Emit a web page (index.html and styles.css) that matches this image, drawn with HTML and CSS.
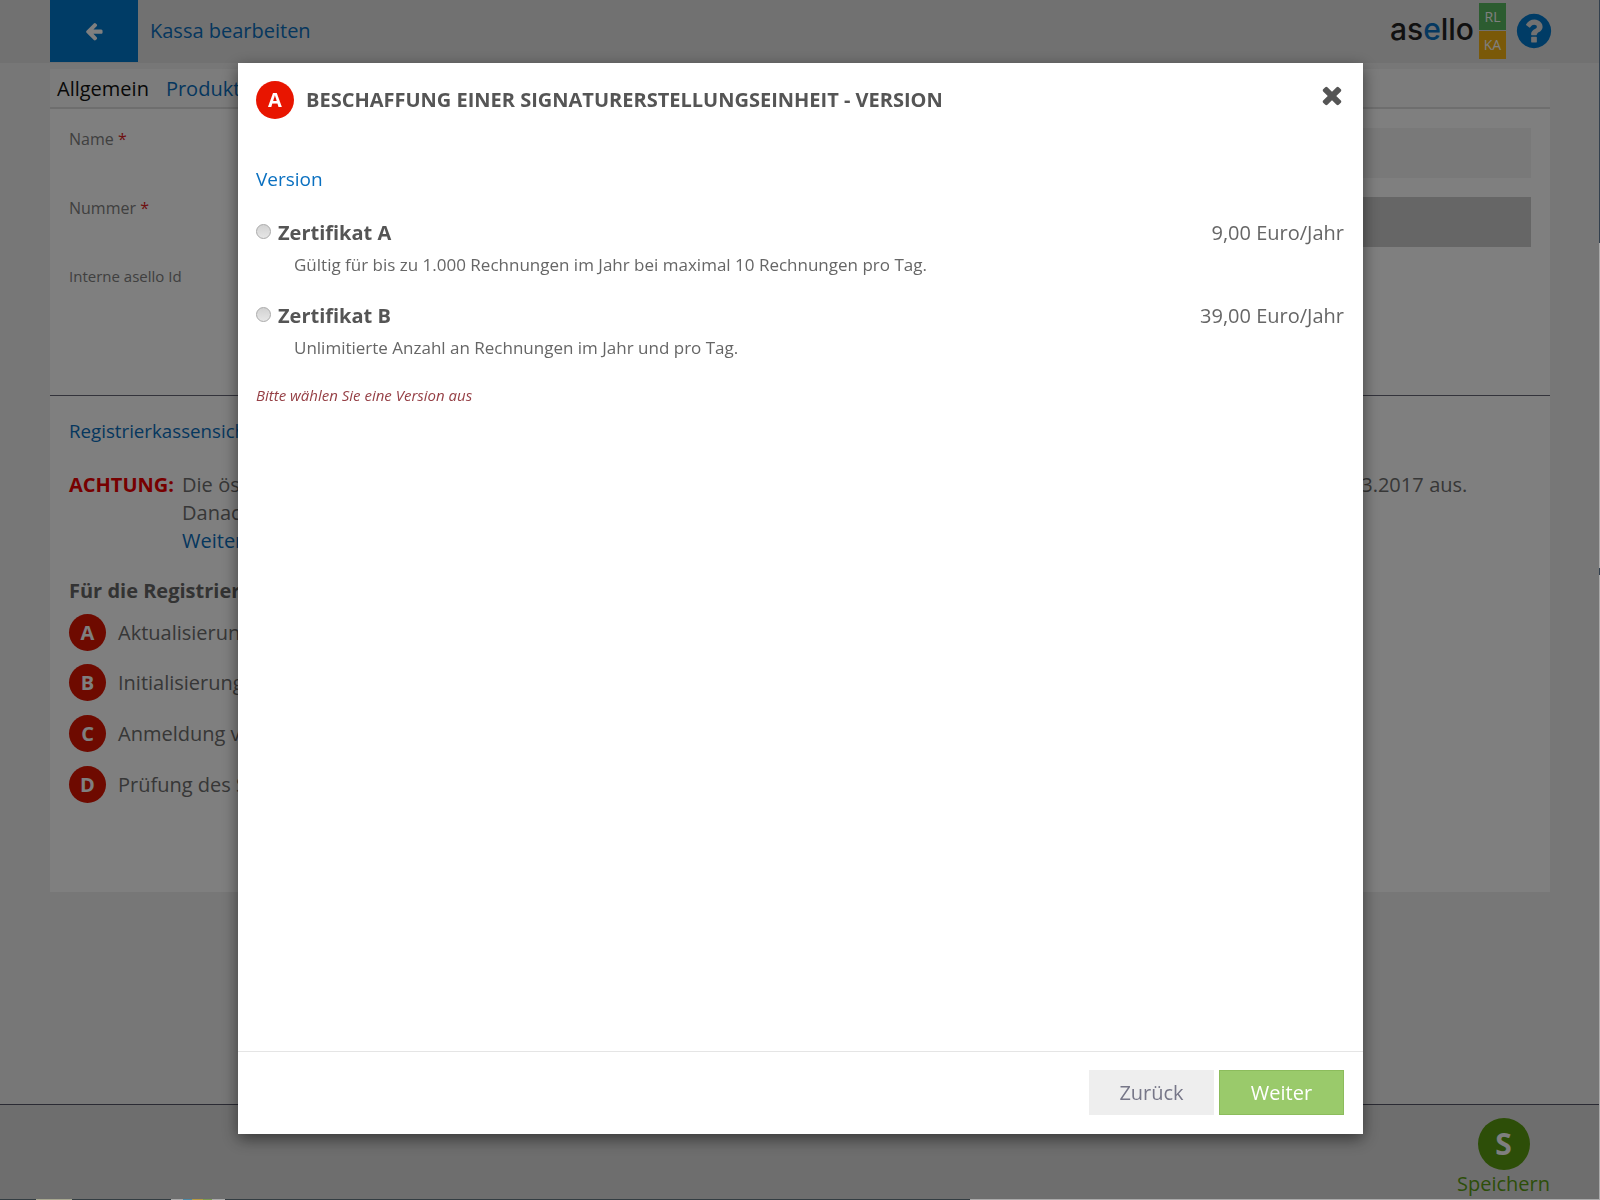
FILE: index.html
```html
<!DOCTYPE html>
<html lang="de">
<head>
<meta charset="utf-8">
<title>Kassa bearbeiten</title>
<link rel="stylesheet" href="styles.css">
</head>
<body>
<div class="page">
  <header class="topbar">
    <a class="back"><svg class="back-icon" viewBox="0 0 1792 1792"><path d="M1664 896v128q0 53-32.500 90.500t-84.500 37.500h-704l293 294q38 36 38 90t-38 90l-75 76q-37 37-90 37-52 0-91-37l-651-652q-37-37-37-90 0-52 37-91l651-650q38-38 91-38 52 0 90 38l75 74q38 38 38 91t-38 91l-293 293h704q52 0 84.500 37.500t32.500 90.500z"/></svg></a>
    <div class="page-title">Kassa bearbeiten</div>
    <div class="brand">
      <span class="logo">as<span class="logo-e">e</span>llo</span>
      <div class="badges"><span class="badge badge-rl">RL</span><span class="badge badge-ka">KA</span></div>
      <svg class="help" viewBox="0 0 1792 1792"><path d="M1024 1376v-192q0-14-9-23t-23-9h-192q-14 0-23 9t-9 23v192q0 14 9 23t23 9h192q14 0 23-9t9-23zm256-672q0-88-55.500-163t-138.500-116-170-41q-243 0-371 213-15 24 8 42l132 100q7 6 19 6 16 0 25-12 53-68 86-92 34-24 86-24 48 0 85.500 26t37.500 59q0 38-20 61t-68 45q-63 28-115.500 86.500t-52.500 125.500v36q0 14 9 23t23 9h192q14 0 23-9t9-23q0-19 21.500-49.500t54.500-49.500q32-18 49-28.500t46-35 44.500-48 28-60.500 12.500-81zm384 192q0 209-103 385.500t-279.500 279.500-385.500 103-385.500-103-279.500-279.500-103-385.500 103-385.500 279.500-279.500 385.500-103 385.500 103 279.500 279.500 103 385.500z"/></svg>
    </div>
  </header>
  <main class="content">
    <section class="card">
      <nav class="tabs"><span class="tab tab-active">Allgemein</span><span class="tab">Produkte</span></nav>
      <div class="form">
        <div class="form-row"><label class="label">Name <em class="req">*</em></label><div class="input"></div></div>
        <div class="form-row"><label class="label">Nummer <em class="req">*</em></label><div class="input input-dark"></div></div>
        <div class="form-row"><label class="label label-small">Interne asello Id</label></div>
      </div>
      <div class="rksv">
        <div class="rksv-link">Registrierkassensicherheitsverordnung</div>
        <div class="notice">
          <strong class="notice-label">ACHTUNG:</strong>
          <div class="notice-body">
            <p class="notice-line">Die österreichische Registrierkassensicherheitsverordnung sieht die Inbetriebnahme aller Registrierkassen spätestens am 31.03.2017 aus.</p>
            <p>Danach</p>
            <p class="notice-more">Weitere</p>
          </div>
        </div>
        <h3 class="steps-title">Für die Registrierung</h3>
        <div class="steps">
          <div class="step"><span class="step-dot">A</span>Aktualisierung</div>
          <div class="step"><span class="step-dot">B</span>Initialisierung</div>
          <div class="step"><span class="step-dot">C</span>Anmeldung von</div>
          <div class="step"><span class="step-dot">D</span>Prüfung des Startbelegs</div>
        </div>
      </div>
    </section>
  </main>
  <footer class="footer">
    <div class="save"><span class="save-dot">S</span><span class="save-label">Speichern</span></div>
  </footer>
</div>
<div class="overlay"></div>
<div class="modal">
  <div class="modal-head">
    <span class="modal-dot">A</span>
    <h2 class="modal-title">BESCHAFFUNG EINER SIGNATURERSTELLUNGSEINHEIT - VERSION</h2>
    <svg class="close" viewBox="0 0 1792 1792"><path d="M1490 1322q0 40-28 68l-136 136q-28 28-68 28t-68-28l-294-294-294 294q-28 28-68 28t-68-28l-136-136q-28-28-28-68t28-68l294-294-294-294q-28-28-28-68t28-68l136-136q28-28 68-28t68 28l294 294 294-294q28-28 68-28t68 28l136 136q28 28 28 68t-28 68l-294 294 294 294q28 28 28 68z"/></svg>
  </div>
  <div class="modal-body">
    <div class="section-name">Version</div>
    <div class="option">
      <div class="option-top">
        <input class="radio" type="radio" name="version">
        <span class="option-name">Zertifikat A</span>
        <span class="option-price">9,00 Euro/Jahr</span>
      </div>
      <p class="option-desc">Gültig für bis zu 1.000 Rechnungen im Jahr bei maximal 10 Rechnungen pro Tag.</p>
    </div>
    <div class="option">
      <div class="option-top">
        <input class="radio" type="radio" name="version">
        <span class="option-name">Zertifikat B</span>
        <span class="option-price">39,00 Euro/Jahr</span>
      </div>
      <p class="option-desc">Unlimitierte Anzahl an Rechnungen im Jahr und pro Tag.</p>
    </div>
    <p class="error">Bitte wählen Sie eine Version aus</p>
  </div>
  <div class="modal-foot">
    <button class="btn btn-back">Zurück</button>
    <button class="btn btn-next">Weiter</button>
  </div>
</div>
<div class="edge-right"></div>
<div class="edge-bottom"></div>
</body>
</html>
```
FILE: styles.css
```css
* { box-sizing: border-box; }
html, body { margin: 0; height: 100%; }
body { font-family: "Open Sans", sans-serif; color: #555; background: #eee; overflow: hidden; }
.page { height: 1200px; display: flex; flex-direction: column; }

.topbar { height: 63px; background: #e2e2e2; display: flex; align-items: flex-start; padding: 0 50px; flex: none; }
.back { width: 88px; height: 62px; background: #0078cc; display: flex; align-items: center; justify-content: center; }
.back-icon { width: 20px; height: 20px; fill: #fff; }
.page-title { margin-left: 12px; font-size: 20px; line-height: 62px; color: #0a6ebd; }
.brand { margin-left: auto; display: flex; align-items: flex-start; }
.logo { font-family: "Inter", sans-serif; font-weight: 500; font-size: 30px; line-height: 58px; color: #222; }
.logo-e { color: #0a70c0; }
.badges { margin-left: 5px; margin-top: 3px; display: flex; flex-direction: column; gap: 1px; }
.badge { width: 27px; height: 27px; font-size: 14px; line-height: 27px; text-align: center; color: #fff; }
.badge-rl { background: #59b860; }
.badge-ka { background: #f5b312; height: 28px; }
.help { width: 40px; height: 40px; margin-left: 8px; margin-top: 11px; margin-right: -4px; fill: #0078cc; }

.content { flex: 1; padding: 6px 50px 0; }
.card { height: 823px; background: #fff; }
.tabs { height: 40px; background: #f8f8f8; border-bottom: 2px solid #ddd; display: flex; gap: 17px; padding-left: 7px; }
.tab { font-size: 20px; line-height: 39px; color: #0a6ebd; }
.tab-active { color: #111; }
.form { height: 287px; padding: 19px 19px 0; border-bottom: 1px solid #667; }
.form-row { display: flex; height: 69px; }
.label { width: 200px; font-size: 16px; line-height: 22px; color: #808080; }
.label-small { font-size: 15px; line-height: 20px; }
.req { font-style: normal; color: #d22; }
.input { flex: 1; height: 50px; background: #f2f2f2; }
.input-dark { background: #ccc; }
.rksv { padding: 20px 19px 0; }
.rksv-link { font-size: 18.72px; line-height: 30px; color: #0a6ebd; }
.notice { display: flex; margin-top: 25px; font-size: 20px; line-height: 28px; color: #6e6e6e; }
.notice-label { color: #e00; width: 113px; flex: none; }
.notice-body p { margin: 0; }
.notice-body .notice-line { word-spacing: .3px; }
.notice-body .notice-more { color: #0a6ebd; }
.steps-title { margin: 22px 0 0; font-size: 20px; line-height: 28px; font-weight: 700; color: #666; }
.steps { display: flex; flex-direction: column; gap: 12.9px; margin-top: 8px; }
.step { display: flex; align-items: center; gap: 12px; height: 38px; font-size: 20px; color: #6e6e6e; }
.step-dot { width: 37px; height: 37px; border-radius: 50%; background: #dc1400; color: #fff; font-weight: 700; font-size: 20px; text-align: center; line-height: 37px; }

.footer { height: 96px; flex: none; background: #ddd; border-top: 1px solid #556; display: flex; justify-content: flex-end; padding-right: 50px; }
.save { display: flex; flex-direction: column; align-items: center; padding-top: 13px; }
.save-dot { width: 52px; height: 52px; border-radius: 50%; background: #5a9c10; color: #fff; font-weight: 700; font-size: 30px; line-height: 52px; text-align: center; }
.save-label { font-size: 20px; line-height: 26px; margin-top: 1px; color: #5a9c10; }

.overlay { position: fixed; inset: 0; background: rgba(0, 0, 0, .5); }
.edge-right { position: fixed; top: 0; right: 0; bottom: 0; width: 1px; background: linear-gradient(180deg, #33404e 0 243px, #aaa 243px 568px, #33404e 568px 575px, #aaa 575px); }
.edge-bottom { position: fixed; left: 0; right: 0; bottom: 0; height: 1px; background: linear-gradient(90deg, #333d42 0 36px, #a8a890 36px 72px, #333d42 72px 171px, #aaa 171px 183px, #4a8aa8 183px 192px, #b89a40 192px 203px, #7a9a50 203px 212px, #aaa 212px 225px, #333d42 225px 970px, #aaa 970px); }
.modal { position: fixed; left: 238px; top: 63px; width: 1125px; height: 1071px; background: #fff; box-shadow: 0 5px 15px rgba(0, 0, 0, .5); display: flex; flex-direction: column; }
.modal-head { display: flex; align-items: flex-start; padding: 18px 19px 0 18px; height: 90px; flex: none; }
.modal-dot { width: 38px; height: 38px; border-radius: 50%; background: #e81500; color: #fff; font-weight: 700; font-size: 20px; line-height: 38px; text-align: center; }
.modal-title { margin: 0 0 0 12px; font-size: 20px; line-height: 38px; font-weight: 700; color: #555; }
.close { width: 28px; height: 28px; margin-left: auto; margin-right: -2px; fill: #555; }
.modal-body { flex: 1; padding: 0 19px 0 18px; }
.section-name { font-size: 19px; line-height: 26px; color: #0a70c0; margin-top: 13px; }
.option { margin-top: 26px; }
.option + .option { margin-top: 22px; }
.option-top { display: flex; align-items: center; height: 28px; }
.radio { appearance: none; width: 15px; height: 15px; margin: 0 7px 2px 0; border-radius: 50%; border: 1px solid #aaa; background: linear-gradient(#d2d2d2, #e6e6e6); }
.option-name { font-size: 20px; font-weight: 700; color: #555; }
.option-price { margin-left: auto; font-size: 20px; color: #666; }
.option-desc { margin: 5px 0 0 38px; font-size: 17px; line-height: 28px; color: #666; }
.error { margin: 23px 0 0; font-size: 15px; line-height: 20px; font-style: italic; color: #964046; }
.modal-foot { height: 83px; flex: none; border-top: 1px solid #e5e5e5; display: flex; justify-content: flex-end; align-items: flex-start; gap: 5px; padding: 18px 19px 0; }
.btn { width: 125px; height: 45px; font-family: inherit; font-size: 20px; border: 1px solid transparent; padding: 0; }
.btn-back { background: #eee; color: #778; border-color: #eee; }
.btn-next { background: #9aca6b; color: #fff; border-color: #8cbc5c; }
```
